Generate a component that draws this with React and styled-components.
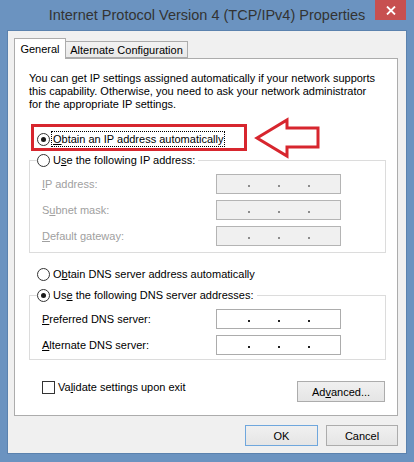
import React from 'react'
import styled, { createGlobalStyle } from 'styled-components'

const GlobalStyle = createGlobalStyle`
    html, body {
        margin: 0;
        padding: 0;
        background: #6b93c0;
    }
    body {
        font-family: "Liberation Sans", Arial, sans-serif;
        font-size: 11px;
        color: #000;
    }
`

const Window = styled.div`
    width: 414px;
    height: 462px;
    box-sizing: border-box;
    padding: 0 8px 9px;
    background: #6b93c0;
    display: flex;
    flex-direction: column;
`

const TitleBar = styled.div`
    height: 31px;
    flex: none;
    display: grid;
    grid-template-columns: 1fr auto 1fr;
    align-items: start;
`

const Title = styled.div`
    grid-column: 2;
    font-size: 14.5px;
    line-height: 31px;
    color: #333;
    white-space: nowrap;
`

const CloseButton = styled.button`
    grid-column: 3;
    justify-self: end;
    width: 31px;
    height: 20px;
    margin: 0;
    padding: 0;
    border: none;
    background: #c75050;
    display: flex;
    align-items: center;
    justify-content: center;
`

const Body = styled.div`
    background: #f0f0f0;
    box-shadow: 0 0 0 1px #5b82ae;
    padding: 7px 8px 7px 6px;
    display: flex;
    flex-direction: column;
`

const TabList = styled.div`
    display: flex;
    align-items: flex-end;
    height: 21px;
    margin-bottom: -1px;
    position: relative;
    z-index: 1;
`

const Tab = styled.div`
    box-sizing: border-box;
    width: ${p => p.$width}px;
    height: ${p => (p.$active ? 21 : 17)}px;
    margin-bottom: ${p => (p.$active ? 0 : 1)}px;
    margin-left: ${p => (p.$active ? 0 : -1)}px;
    border: 1px solid #acacac;
    border-bottom: ${p => (p.$active ? 'none' : '1px solid #acacac')};
    background: ${p => (p.$active ? '#fff' : 'linear-gradient(#f2f2f2, #e9e9e9)')};
    line-height: ${p => (p.$active ? 20 : 16)}px;
    text-align: center;
    white-space: nowrap;
`

const Panel = styled.div`
    position: relative;
    background: #fff;
    border: 1px solid #acacac;
    padding: 13px 11px 13px 14px;
    display: flex;
    flex-direction: column;
`

const Intro = styled.p`
    margin: 0;
    line-height: 13px;
    white-space: nowrap;
`

const Option = styled.label`
    display: flex;
    align-items: center;
    gap: 3px;
    height: 16px;
    margin: ${p => p.$top || 0}px 0 0 8px;
`

const Radio = styled.span`
    box-sizing: border-box;
    width: 13px;
    height: 13px;
    flex: none;
    border: 1px solid #333;
    border-radius: 50%;
    background: #fff;
    display: flex;
    align-items: center;
    justify-content: center;

    &::after {
        content: '';
        display: ${p => (p.$checked ? 'block' : 'none')};
        width: 5px;
        height: 5px;
        border-radius: 50%;
        background: #1a1a1a;
    }
`

const Focused = styled.span`
    outline: 1px dotted #000;
    padding: 0 1px;
    margin-left: -1px;
    line-height: 14px;
`

const Key = styled.u`
    text-decoration: underline;
    text-underline-offset: 1px;
`

const Group = styled.fieldset`
    margin: 5px 0 0;
    min-inline-size: 0;
    border: 1px solid #dcdcdc;
    padding: 6px 0 ${p => p.$bottom}px 12px;
`

const Legend = styled.legend`
    display: flex;
    align-items: center;
    gap: 3px;
    height: 16px;
    margin-left: -5px;
    padding: 0 3px 0 0;
`

const FieldList = styled.div`
    display: flex;
    flex-direction: column;
    gap: 6px;
`

const Field = styled.div`
    display: flex;
    align-items: center;
    height: 20px;
`

const FieldLabel = styled.span`
    width: 174px;
    color: ${p => (p.$disabled ? '#a0a0a0' : '#000')};
`

const IpBox = styled.div`
    box-sizing: border-box;
    width: 125px;
    height: 20px;
    border: 1px solid ${p => (p.$disabled ? '#b4b4b4' : '#acacac')};
    background: ${p => (p.$disabled ? '#f0f0f0' : '#fff')};
    padding-left: 17px;
    display: grid;
    grid-template-columns: repeat(3, 30px);
    align-items: start;
    justify-items: center;
`

const Dot = styled.span`
    width: 2px;
    height: 2px;
    margin-top: 10px;
    background: ${p => (p.$disabled ? '#8c8c8c' : '#222')};
`

const Actions = styled.div`
    display: flex;
    justify-content: space-between;
    align-items: flex-start;
    margin-top: 21px;
`

const CheckLabel = styled.label`
    display: flex;
    align-items: center;
    gap: 3px;
    height: 16px;
    margin: -2px 0 0 13px;
`

const Checkbox = styled.span`
    box-sizing: border-box;
    width: 13px;
    height: 13px;
    border: 1px solid #333;
    background: #fff;
`

const Button = styled.button`
    box-sizing: border-box;
    width: ${p => p.$width}px;
    height: 21px;
    margin: 0 ${p => p.$right || 0}px 0 0;
    padding: 0;
    border: 1px solid ${p => (p.$primary ? '#6fa7dd' : '#acacac')};
    background: linear-gradient(#f0f0f0, #e5e5e5);
    font: inherit;
    color: #000;
`

const Footer = styled.div`
    display: flex;
    justify-content: flex-end;
    gap: 8px;
    margin-top: 9px;
`

const Highlight = styled.div`
    position: absolute;
    left: 16px;
    top: 65px;
    width: 216px;
    height: 27px;
    box-sizing: border-box;
    border: 3px solid #d7262e;
    pointer-events: none;
`

const Pointer = styled.svg`
    position: absolute;
    left: 239px;
    top: 58px;
    pointer-events: none;
`

const IpInput = ({ disabled }) => (
    <IpBox $disabled={disabled}>
        <Dot $disabled={disabled} />
        <Dot $disabled={disabled} />
        <Dot $disabled={disabled} />
    </IpBox>
)

export default function App() {
    return (
        <>
            <GlobalStyle />
            <Window>
                <TitleBar>
                    <Title>Internet Protocol Version 4 (TCP/IPv4) Properties</Title>
                    <CloseButton aria-label="Close">
                        <svg width="10" height="9" viewBox="0 0 10 9">
                            <path d="M1 0.5 L9 8.5 M9 0.5 L1 8.5" stroke="#fff" strokeWidth="1.8" />
                        </svg>
                    </CloseButton>
                </TitleBar>
                <Body>
                    <TabList>
                        <Tab $active $width={52}>General</Tab>
                        <Tab $width={123}>Alternate Configuration</Tab>
                    </TabList>
                    <Panel>
                        <Intro>
                            You can get IP settings assigned automatically if your network supports<br />
                            this capability. Otherwise, you need to ask your network administrator<br />
                            for the appropriate IP settings.
                        </Intro>

                        <Option $top={20}>
                            <Radio $checked />
                            <Focused><Key>O</Key>btain an IP address automatically</Focused>
                        </Option>

                        <Group $bottom={6}>
                            <Legend>
                                <Radio />
                                <span>U<Key>s</Key>e the following IP address:</span>
                            </Legend>
                            <FieldList>
                                <Field>
                                    <FieldLabel $disabled><Key>I</Key>P address:</FieldLabel>
                                    <IpInput disabled />
                                </Field>
                                <Field>
                                    <FieldLabel $disabled>S<Key>u</Key>bnet mask:</FieldLabel>
                                    <IpInput disabled />
                                </Field>
                                <Field>
                                    <FieldLabel $disabled><Key>D</Key>efault gateway:</FieldLabel>
                                    <IpInput disabled />
                                </Field>
                            </FieldList>
                        </Group>

                        <Option $top={13}>
                            <Radio />
                            <span>O<Key>b</Key>tain DNS server address automatically</span>
                        </Option>

                        <Group $bottom={4}>
                            <Legend>
                                <Radio $checked />
                                <span>Us<Key>e</Key> the following DNS server addresses:</span>
                            </Legend>
                            <FieldList>
                                <Field>
                                    <FieldLabel><Key>P</Key>referred DNS server:</FieldLabel>
                                    <IpInput />
                                </Field>
                                <Field>
                                    <FieldLabel><Key>A</Key>lternate DNS server:</FieldLabel>
                                    <IpInput />
                                </Field>
                            </FieldList>
                        </Group>

                        <Actions>
                            <CheckLabel>
                                <Checkbox />
                                <span>Va<Key>l</Key>idate settings upon exit</span>
                            </CheckLabel>
                            <Button $width={88} $right={1}>Ad<Key>v</Key>anced...</Button>
                        </Actions>

                        <Highlight />
                        <Pointer width="67" height="43" viewBox="0 0 67 43">
                            <polygon
                                points="3,21 33,3 33,11 64,11 64,30 33,30 33,39"
                                fill="#fff"
                                stroke="#d7262e"
                                strokeWidth="3"
                                strokeLinejoin="miter"
                            />
                        </Pointer>
                    </Panel>
                    <Footer>
                        <Button $primary $width={73}>OK</Button>
                        <Button $width={72}>Cancel</Button>
                    </Footer>
                </Body>
            </Window>
        </>
    )
}
